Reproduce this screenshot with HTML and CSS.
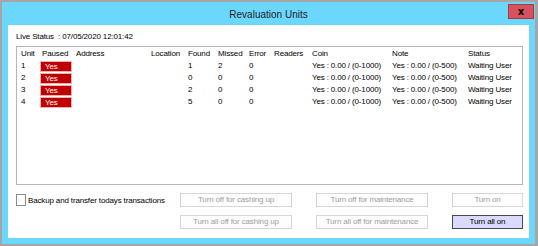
FILE: index.html
```html
<!DOCTYPE html>
<html>
  <head>
    <title>Revaluation Units</title>
    <link rel="stylesheet" href="styles.css">
  </head>
  <body>
    <div class="window">
      <div class="titlebar">
        <span class="title">Revaluation Units</span>
        <button class="close">x</button>
      </div>
      <div class="panel">
        <div class="live">Live Status &nbsp;: 07/05/2020 12:01:42</div>
        <div class="units">
          <table>
            <tr>
              <th class="c-unit">Unit</th>
              <th class="c-paused">Paused</th>
              <th class="c-address">Address</th>
              <th class="c-location">Location</th>
              <th class="c-found">Found</th>
              <th class="c-missed">Missed</th>
              <th class="c-error">Error</th>
              <th class="c-readers">Readers</th>
              <th class="c-coin">Coin</th>
              <th class="c-note">Note</th>
              <th class="c-status">Status</th>
            </tr>
            <tr>
              <td>1</td><td><span class="yes">Yes</span></td><td></td><td></td>
              <td>1</td><td>2</td><td>0</td><td></td>
              <td>Yes : 0.00 / (0-1000)</td><td>Yes : 0.00 / (0-500)</td><td>Waiting User</td>
            </tr>
            <tr>
              <td>2</td><td><span class="yes">Yes</span></td><td></td><td></td>
              <td>0</td><td>0</td><td>0</td><td></td>
              <td>Yes : 0.00 / (0-1000)</td><td>Yes : 0.00 / (0-500)</td><td>Waiting User</td>
            </tr>
            <tr>
              <td>3</td><td><span class="yes">Yes</span></td><td></td><td></td>
              <td>2</td><td>0</td><td>0</td><td></td>
              <td>Yes : 0.00 / (0-1000)</td><td>Yes : 0.00 / (0-500)</td><td>Waiting User</td>
            </tr>
            <tr>
              <td>4</td><td><span class="yes">Yes</span></td><td></td><td></td>
              <td>5</td><td>0</td><td>0</td><td></td>
              <td>Yes : 0.00 / (0-1000)</td><td>Yes : 0.00 / (0-500)</td><td>Waiting User</td>
            </tr>
          </table>
        </div>
        <div class="actions">
          <label class="backup"><span class="box"></span>Backup and transfer todays transactions</label>
          <div class="btncol col1">
            <button class="btn" disabled>Turn off for cashing up</button>
            <button class="btn" disabled>Turn all off for cashing up</button>
          </div>
          <div class="btncol col2">
            <button class="btn" disabled>Turn off for maintenance</button>
            <button class="btn" disabled>Turn all off for maintenance</button>
          </div>
          <div class="btncol col3">
            <button class="btn" disabled>Turn on</button>
            <button class="btn on">Turn all on</button>
          </div>
        </div>
      </div>
    </div>
  </body>
</html>
```

FILE: styles.css
```css
body {
  margin: 0;
  padding: 0;
  font-family: "Liberation Sans", Arial, sans-serif;
  font-size: 8px;
  letter-spacing: -0.15px;
  color: #000;
}

.window {
  width: 538px;
  height: 246px;
  box-sizing: border-box;
  border: 2px solid #a6a6a6;
  border-right-width: 3px;
  background-color: #6bd7fc;
  display: flex;
  flex-direction: column;
}

.titlebar {
  height: 23px;
  display: flex;
  align-items: center;
  justify-content: center;
  position: relative;
}

.title {
  font-size: 10px;
  letter-spacing: 0;
  color: #1e1e1e;
  margin-top: 1px;
}

.close {
  position: absolute;
  top: 2px;
  right: 1px;
  width: 26px;
  height: 15px;
  padding: 0;
  border: 1px solid #a33c45;
  background-color: #d9515c;
  color: #000;
  font-family: "DejaVu Sans", sans-serif;
  font-weight: bold;
  font-size: 10px;
  line-height: 11px;
}

.panel {
  flex: 1;
  background-color: #fff;
  margin: 0 6px 6px 6px;
  padding: 5px 6px 0 8px;
}

.live {
  height: 16px;
  line-height: 14px;
}

.units {
  height: 139px;
  box-sizing: border-box;
  border: 1px solid #b3b3c4;
  padding: 1px 0 0 4px;
}

.units table {
  border-collapse: collapse;
  table-layout: fixed;
}

.units th,
.units td {
  padding: 0;
  height: 12px;
  line-height: 12px;
  text-align: left;
  font-weight: normal;
  white-space: nowrap;
  vertical-align: middle;
}

.c-unit { width: 21px; }
.c-paused { width: 34px; }
.c-address { width: 75px; }
.c-location { width: 37px; }
.c-found { width: 30px; }
.c-missed { width: 31px; }
.c-error { width: 25px; }
.c-readers { width: 38px; }
.c-coin { width: 80px; }
.c-note { width: 76px; }
.c-status { width: 48px; }

.yes {
  display: block;
  width: 32px;
  height: 11px;
  line-height: 10px;
  margin-left: -2px;
  box-sizing: border-box;
  padding-left: 4px;
  background-color: #c00000;
  border: 1px solid #f0b0b0;
  color: #fff;
}

.actions {
  display: flex;
  margin-top: 8px;
}

.backup {
  display: flex;
  align-items: center;
  height: 14px;
  width: 164px;
  flex-shrink: 0;
  white-space: nowrap;
}

.box {
  width: 8px;
  height: 10px;
  border: 1px solid #8c8c8c;
  margin-right: 2px;
  background-color: #fff;
}

.btncol {
  display: flex;
  flex-direction: column;
  gap: 8px;
  flex-shrink: 0;
}

.col2,
.col3 {
  margin-left: 24px;
}

.btn {
  height: 14px;
  padding: 0;
  font-family: "Liberation Sans", Arial, sans-serif;
  font-size: 8px;
  letter-spacing: -0.15px;
  line-height: 12px;
  background-color: #fdfdfd;
  border: 1px solid #d6d6d6;
  color: #9e9e9e;
  white-space: nowrap;
}

.col1 .btn,
.col2 .btn {
  width: 112px;
}

.col3 .btn {
  width: 71px;
}

.btn.on {
  background-color: #dadafc;
  border-color: #4a4a4a;
  color: #000;
}
```
